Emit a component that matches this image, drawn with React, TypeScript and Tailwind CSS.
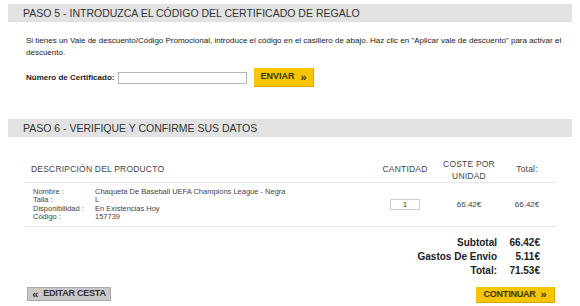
import React from 'react';

const FONT = { fontFamily: '"Liberation Sans", Arial, sans-serif' };

const SectionHeader: React.FC<{ title: string }> = ({ title }) => (
  <div className="mx-2 h-[18px] bg-[#e2e2e2] pl-[15px] flex items-center text-[10.5px] text-[#333] leading-none">
    {title}
  </div>
);

interface ProductLine {
  label: string;
  value: string;
}

const PRODUCT: ProductLine[] = [
  { label: 'Nombre :', value: 'Chaqueta De Baseball UEFA Champions League - Negra' },
  { label: 'Talla :', value: 'L' },
  { label: 'Disponibilidad :', value: 'En Existencias Hoy' },
  { label: 'Código :', value: '157739' },
];

const TOTALS = [
  { label: 'Subtotal', value: '66.42€' },
  { label: 'Gastos De Envio', value: '5.11€' },
  { label: 'Total:', value: '71.53€' },
];

const App: React.FC = () => {
  return (
    <div className="w-[580px] h-[306px] overflow-hidden bg-white text-[#222] pt-1" style={FONT}>
      {/* Paso 5 */}
      <SectionHeader title="PASO 5 - INTRODUZCA EL CÓDIGO DEL CERTIFICADO DE REGALO" />
      <p className="mt-[13px] pl-[26px] pr-4 text-[8px] leading-[12px] text-[#222]">
        Si tienes un Vale de descuento/Código Promocional, introduce el código en el casillero de abajo. Haz clic en "Aplicar vale de descuento" para activar el descuento.
      </p>
      <div className="mt-[9px] pl-[26px] flex items-center h-[19px]">
        <span className="text-[8px] font-bold text-[#222] w-[92px]">Número de Certificado:</span>
        <div className="w-[129px] h-[12px] border border-[#b5b5b5] bg-white" />
        <button className="ml-[7px] w-[60px] h-[19px] bg-[#f7c600] border-b border-r border-[#d9a900] flex items-center justify-center gap-[6px] text-[9px] font-bold text-[#3a3200]">
          <span>ENVIAR</span>
          <span className="text-[11px] leading-none">»</span>
        </button>
      </div>

      {/* Paso 6 */}
      <div className="mt-[32px]">
        <SectionHeader title="PASO 6 - VERIFIQUE Y CONFIRME SUS DATOS" />
      </div>

      <div className="ml-6 w-[532px]">
        <div className="mt-[20px] flex items-center h-[26px] pr-[4px] text-[#444] text-[8.5px] tracking-[0.2px] border-b border-[#e6e6e6]">
          <div className="flex-1 pl-[7px]">DESCRIPCIÓN DEL PRODUCTO</div>
          <div className="w-[62px] text-center">CANTIDAD</div>
          <div className="w-[66px] text-center leading-[12px]">COSTE POR<br />UNIDAD</div>
          <div className="w-[50px] text-center">Total:</div>
        </div>

        <div className="flex items-center h-[44px] pr-[4px] border-b border-[#e6e6e6] text-[#444]">
          <div className="flex-1 pl-[9px] text-[7.5px] leading-[8.5px]">
            {PRODUCT.map((p) => (
              <div key={p.label} className="flex">
                <span className="w-[62px]">{p.label}</span>
                <span>{p.value}</span>
              </div>
            ))}
          </div>
          <div className="w-[62px] flex justify-center">
            <div className="w-[30px] h-[11px] border border-[#cfcfcf] text-[8px] leading-[9px] text-center">1</div>
          </div>
          <div className="w-[66px] text-center text-[8px]">66.42€</div>
          <div className="w-[50px] text-center text-[8px]">66.42€</div>
        </div>
      </div>

      <div className="mt-[8px] flex flex-col items-end pr-[40px] text-[10px] font-bold text-[#222]">
        {TOTALS.map((t) => (
          <div key={t.label} className="flex h-[14px] items-center">
            <span className="text-right">{t.label}</span>
            <span className="w-[43px] text-right">{t.value}</span>
          </div>
        ))}
      </div>

      <div className="mt-[10px] flex items-start justify-between pl-[27px] pr-[25px]">
        <button className="w-[84px] h-[14px] bg-[#c9c9c9] border border-[#a9a9a9] flex items-center justify-center gap-[5px] text-[9px] font-bold text-[#333] tracking-tight">
          <span className="text-[11px] leading-none">«</span>
          <span>EDITAR CESTA</span>
        </button>
        <button className="w-[79px] h-[16px] bg-[#f7c600] border-b border-r border-[#d9a900] flex items-center justify-center gap-[5px] text-[9px] font-bold text-[#3a3200] tracking-tight">
          <span>CONTINUAR</span>
          <span className="text-[11px] leading-none">»</span>
        </button>
      </div>
    </div>
  );
};

export default App;
